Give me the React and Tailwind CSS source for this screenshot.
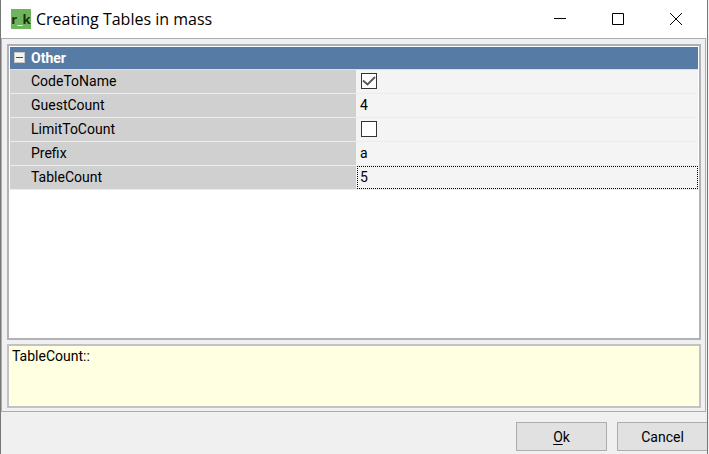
import React, { useState } from 'react';

const initialRows = [
  { name: 'CodeToName', type: 'check', value: true },
  { name: 'GuestCount', type: 'text', value: '4' },
  { name: 'LimitToCount', type: 'check', value: false },
  { name: 'Prefix', type: 'text', value: 'a' },
  { name: 'TableCount', type: 'text', value: '5' },
];

function TitleBar() {
  return (
    <header className="flex h-[38px] items-center bg-white pl-2.5">
      <span className="flex h-5 w-5 shrink-0 items-center justify-center bg-[#6fb35d] font-['Open_Sans',sans-serif] text-[13px] font-bold leading-4 text-[#17300f]">
        r<span className="text-[#e9f5e4]">_</span>k
      </span>
      <h1 className="ml-[5px] flex-1 truncate font-['Open_Sans','Noto_Sans',sans-serif] text-base leading-5 text-black">
        Creating Tables in mass
      </h1>
      <div className="flex h-full pr-0.5">
        <button type="button" aria-label="Minimize" className="flex w-[58px] items-center justify-center">
          <svg width="12" height="12" viewBox="0 0 12 12" stroke="#000" fill="none">
            <path d="M0 5.500H12" />
          </svg>
        </button>
        <button type="button" aria-label="Maximize" className="flex w-[58px] items-center justify-center">
          <svg width="12" height="12" viewBox="0 0 12 12" stroke="#000" fill="none">
            <path d="M.5.5H11.500V11.500H.5Z" />
          </svg>
        </button>
        <button type="button" aria-label="Close" className="flex w-[58px] items-center justify-center">
          <svg width="12" height="12" viewBox="0 0 12 12" stroke="#000" fill="none">
            <path d="M0 0L12 12M12 0L0 12" />
          </svg>
        </button>
      </div>
    </header>
  );
}

function CheckBox({ id, checked, onChange }) {
  return (
    <span className="relative ml-1 block h-4 w-4">
      <input
        id={id}
        type="checkbox"
        checked={checked}
        onChange={(e) => onChange(e.target.checked)}
        className="block h-4 w-4 appearance-none border border-[#333] bg-white"
      />
      {checked && (
        <svg className="pointer-events-none absolute inset-0" width="16" height="16" viewBox="0 0 16 16">
          <path d="M2 7.500L6.500 11.500L14 4" fill="none" stroke="#555" strokeWidth="1.800" />
        </svg>
      )}
    </span>
  );
}

export default function App() {
  const [rows, setRows] = useState(initialRows);
  const selected = 'TableCount';

  const update = (name, value) => {
    setRows(rows.map((r) => (r.name === name ? { ...r, value } : r)));
  };

  return (
    <div className="flex min-h-screen flex-col overflow-hidden border-l border-[#777] bg-[#f0f0f0] font-['Roboto','Liberation_Sans',sans-serif] text-sm text-black">
      <div className="mr-px flex flex-1 flex-col border-r border-[#777]">
        <TitleBar />
        <main className="mr-px flex flex-1 flex-col gap-1 border border-[#adadad] p-[5px] pr-1 pb-[3px]">
          <section className="flex-1 border-2 border-[#b0b2b8] border-t-[#a5b1bf] bg-white p-px">
            <table className="w-full table-fixed border-collapse">
              <colgroup>
                <col className="w-[346px]" />
                <col />
              </colgroup>
              <thead>
                <tr className="h-[22px] border-b border-[#d5dfe9] bg-[#567ca6] text-left text-white">
                  <th colSpan={2} className="p-0 font-bold">
                    <div className="flex items-center pl-1">
                      <button
                        type="button"
                        aria-label="Collapse Other"
                        className="flex h-[11px] w-[11px] items-center justify-center border border-[#c8c8c8] bg-[#f4f4f4]"
                      >
                        <span className="h-px w-[7px] bg-[#34506f]" />
                      </button>
                      <span className="ml-1.5">Other</span>
                    </div>
                  </th>
                </tr>
              </thead>
              <tbody>
                {rows.map((row) => (
                  <tr key={row.name} className="h-6 border-b border-[#ececec]">
                    <th scope="row" className="bg-[#d0d0d0] p-0 pl-[21px] text-left font-normal">
                      <label htmlFor={row.name}>{row.name}</label>
                    </th>
                    <td className="bg-[#f4f4f4] p-0 pl-px">
                      {row.type === 'check' ? (
                        <CheckBox id={row.name} checked={row.value} onChange={(v) => update(row.name, v)} />
                      ) : (
                        <input
                          id={row.name}
                          type="text"
                          value={row.value}
                          onChange={(e) => update(row.name, e.target.value)}
                          className={
                            row.name === selected
                              ? 'block h-[23px] w-full border border-dotted border-black bg-transparent px-0.5 outline-none'
                              : 'block h-[23px] w-full border border-transparent bg-transparent px-0.5 outline-none'
                          }
                        />
                      )}
                    </td>
                  </tr>
                ))}
              </tbody>
            </table>
          </section>
          <section className="h-16 border-2 border-[#c2c2c2] bg-[#ffffe1] px-[3px] leading-5">
            {selected}::
          </section>
        </main>
        <footer className="flex h-[42px] justify-end gap-2.5 pt-2.5">
          <button type="button" className="h-[29px] w-[91px] border border-[#adadad] bg-[#e1e1e1]">
            <span className="underline underline-offset-2">O</span>k
          </button>
          <button type="button" className="h-[29px] w-[90px] border border-r-0 border-[#adadad] bg-[#e1e1e1]">
            Cancel
          </button>
        </footer>
      </div>
    </div>
  );
}
